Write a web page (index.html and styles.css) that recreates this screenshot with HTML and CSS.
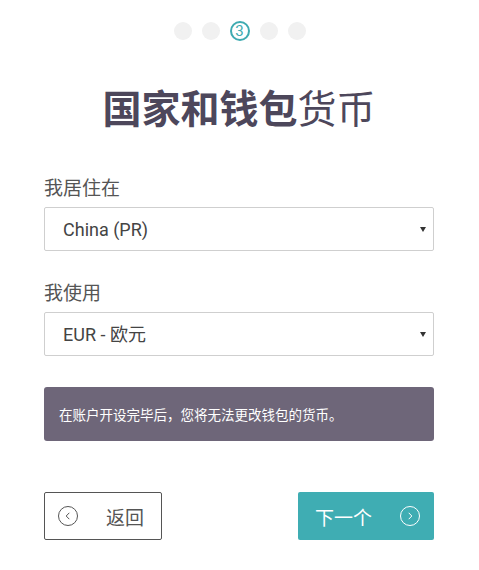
FILE: index.html
```html
<!DOCTYPE html>
<html lang="zh">
<head>
  <meta charset="UTF-8" />
  <title>国家和钱包货币</title>
  <link rel="stylesheet" href="styles.css">
</head>
<body>

<div class="wizard">
  <!-- Step dots -->
  <div class="steps">
    <span class="dot"></span>
    <span class="dot"></span>
    <span class="dot current">3</span>
    <span class="dot"></span>
    <span class="dot"></span>
  </div>

  <h1 class="title"><b>国家和钱包</b>货币</h1>

  <label class="field-label" for="country">我居住在</label>
  <div class="select-wrap">
    <select id="country" class="field-select">
      <option>China (PR)</option>
    </select>
  </div>

  <label class="field-label second" for="currency">我使用</label>
  <div class="select-wrap">
    <select id="currency" class="field-select">
      <option>EUR - 欧元</option>
    </select>
  </div>

  <div class="notice">在账户开设完毕后，您将无法更改钱包的货币。</div>

  <div class="actions">
    <button class="btn btn-back">
      <svg width="22" height="22" viewBox="0 0 22 22"><circle cx="11" cy="11" r="9.5" fill="none" stroke="#555" stroke-width="1"/><path d="M12.3 7.8 L9.2 11 L12.3 14.2" fill="none" stroke="#555" stroke-width="1"/></svg>
      <span>返回</span>
    </button>
    <button class="btn btn-next">
      <span>下一个</span>
      <svg width="22" height="22" viewBox="0 0 22 22"><circle cx="11" cy="11" r="9.5" fill="none" stroke="#fff" stroke-width="1"/><path d="M9.7 7.8 L12.8 11 L9.7 14.2" fill="none" stroke="#fff" stroke-width="1"/></svg>
    </button>
  </div>
</div>

</body>
</html>
```

FILE: styles.css
```css
body {
  margin: 0;
  padding: 0;
  background: #fff;
  font-family: "Noto Sans CJK SC", "Noto Sans", sans-serif;
  color: #555;
}

.wizard {
  width: 390px;
  margin: 0 0 0 44px;
}

/* Step dots */
.steps {
  display: flex;
  justify-content: center;
  align-items: center;
  gap: 10px;
  padding-top: 21px;
  margin-left: -44px;
  width: 479px;
}

.dot {
  width: 18px;
  height: 18px;
  border-radius: 50%;
  background: #f1f1f1;
  box-sizing: border-box;
}

.dot.current {
  width: 20px;
  height: 20px;
  background: #fff;
  border: 2px solid #3fabb1;
  color: #3fabb1;
  font-family: "Roboto", sans-serif;
  font-size: 15px;
  line-height: 16px;
  text-align: center;
}

.title {
  margin: 43px 0 0;
  font-size: 39px;
  line-height: 44px;
  text-align: center;
  font-weight: 400;
  color: #4d475b;
}

.title b {
  font-weight: 700;
}

.field-label {
  display: block;
  margin-top: 47px;
  font-size: 19px;
  line-height: 24px;
  color: #555;
}

.field-label.second {
  margin-top: 29px;
}

.select-wrap {
  position: relative;
  margin-top: 8px;
}

.select-wrap::after {
  content: "";
  position: absolute;
  right: 8px;
  top: 20px;
  border-left: 3px solid transparent;
  border-right: 3px solid transparent;
  border-top: 5px solid #333;
}

.field-select {
  display: block;
  width: 100%;
  height: 44px;
  box-sizing: border-box;
  border: 1px solid #cfcfcf;
  border-radius: 2px;
  background: #fff;
  padding: 0 0 0 18px;
  font-family: "Roboto", "Noto Sans CJK SC", sans-serif;
  font-size: 18px;
  color: #444;
  appearance: none;
  -webkit-appearance: none;
  outline: none;
}

.notice {
  margin-top: 31px;
  height: 54px;
  box-sizing: border-box;
  padding: 0 15px;
  border-radius: 3px;
  background: #6e6679;
  color: #fff;
  font-size: 13.5px;
  line-height: 54px;
}

.actions {
  display: flex;
  justify-content: space-between;
  margin-top: 51px;
}

.btn {
  display: flex;
  align-items: center;
  height: 48px;
  box-sizing: border-box;
  border-radius: 2px;
  font-family: "Noto Sans CJK SC", sans-serif;
  font-size: 19px;
  cursor: pointer;
}

.btn-back {
  width: 118px;
  padding: 0 0 0 12px;
  background: #fff;
  border: 1px solid #555;
  color: #555;
}

.btn-back span {
  margin-left: 27px;
}

.btn-next {
  width: 136px;
  padding: 0 0 0 17px;
  background: #3fadb3;
  border: none;
  color: #fff;
}

.btn-next svg {
  margin-left: 27px;
}
```
